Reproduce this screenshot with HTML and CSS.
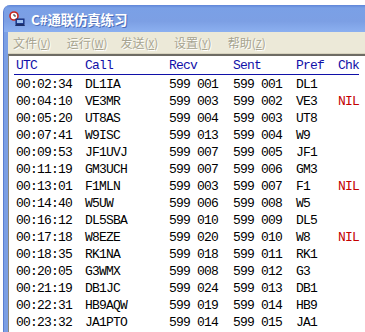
FILE: index.html
```html
<!DOCTYPE html>
<html lang="zh">
<head>
<meta charset="utf-8">
<title>C#通联仿真练习</title>
<link rel="stylesheet" href="styles.css">
</head>
<body>
<div class="window">
  <div class="titlebar">
    <svg class="app-icon" width="16" height="16" viewBox="0 0 16 16">
      <circle cx="5" cy="5" r="4" fill="#fff" stroke="#c8281e" stroke-width="1.6"/>
      <path d="M5 3v2h2" stroke="#333" stroke-width="1" fill="none"/>
      <rect x="7" y="8" width="8" height="5" fill="#2a50b0" stroke="#142a70" stroke-width="1"/>
      <rect x="8" y="9" width="6" height="3" fill="#9fc0f0"/>
      <path d="M6 15h10l-1-2H7z" fill="#1c2e6a"/>
    </svg>
    <span class="title">C#通联仿真练习</span>
  </div>
  <div class="menubar">
    <span class="menu-item">文件(<u>V</u>)</span>
    <span class="menu-item">运行(<u>W</u>)</span>
    <span class="menu-item">发送(<u>X</u>)</span>
    <span class="menu-item">设置(<u>Y</u>)</span>
    <span class="menu-item">帮助(<u>Z</u>)</span>
  </div>
  <div class="list">
    <div class="row head">
      <span>UTC</span><span>Call</span><span>Recv</span><span>Sent</span><span>Pref</span><span>Chk</span>
    </div>
    <div class="row"><span>00:02:34</span><span>DL1IA</span><span>599 001</span><span>599 001</span><span>DL1</span><span></span></div>
    <div class="row"><span>00:04:10</span><span>VE3MR</span><span>599 003</span><span>599 002</span><span>VE3</span><span class="nil">NIL</span></div>
    <div class="row"><span>00:05:20</span><span>UT8AS</span><span>599 004</span><span>599 003</span><span>UT8</span><span></span></div>
    <div class="row"><span>00:07:41</span><span>W9ISC</span><span>599 013</span><span>599 004</span><span>W9</span><span></span></div>
    <div class="row"><span>00:09:53</span><span>JF1UVJ</span><span>599 007</span><span>599 005</span><span>JF1</span><span></span></div>
    <div class="row"><span>00:11:19</span><span>GM3UCH</span><span>599 007</span><span>599 006</span><span>GM3</span><span></span></div>
    <div class="row"><span>00:13:01</span><span>F1MLN</span><span>599 003</span><span>599 007</span><span>F1</span><span class="nil">NIL</span></div>
    <div class="row"><span>00:14:40</span><span>W5UW</span><span>599 006</span><span>599 008</span><span>W5</span><span></span></div>
    <div class="row"><span>00:16:12</span><span>DL5SBA</span><span>599 010</span><span>599 009</span><span>DL5</span><span></span></div>
    <div class="row"><span>00:17:18</span><span>W8EZE</span><span>599 020</span><span>599 010</span><span>W8</span><span class="nil">NIL</span></div>
    <div class="row"><span>00:18:35</span><span>RK1NA</span><span>599 018</span><span>599 011</span><span>RK1</span><span></span></div>
    <div class="row"><span>00:20:05</span><span>G3WMX</span><span>599 008</span><span>599 012</span><span>G3</span><span></span></div>
    <div class="row"><span>00:21:19</span><span>DB1JC</span><span>599 024</span><span>599 013</span><span>DB1</span><span></span></div>
    <div class="row"><span>00:22:31</span><span>HB9AQW</span><span>599 019</span><span>599 014</span><span>HB9</span><span></span></div>
    <div class="row"><span>00:23:32</span><span>JA1PTO</span><span>599 014</span><span>599 015</span><span>JA1</span><span></span></div>
  </div>
</div>
</body>
</html>
```

FILE: styles.css
```css
html, body {
  margin: 0;
  padding: 0;
  background: #ffffff;
  height: 332px;
  overflow: hidden;
}
body {
  padding: 5px 0 0 3px;
  box-sizing: border-box;
}
.window {
  background: #7b9fe4;
  border-left: 1px solid #5a7ed0;
  border-top-left-radius: 7px;
  height: 340px;
  overflow: hidden;
}
.titlebar {
  height: 27px;
  display: flex;
  align-items: center;
  padding-left: 5px;
  gap: 6px;
  background: linear-gradient(#5f86d8 0, #7aa0e6 3px, #7c9fe4 60%, #8cb0f0 100%);
  border-top-left-radius: 7px;
}
.app-icon {
  display: block;
  margin-top: 1px;
}
.title {
  font-family: "Noto Sans CJK SC", sans-serif;
  font-weight: bold;
  font-size: 13.5px;
  color: #ffffff;
  text-shadow: 1px 1px 0 #4a6cb8;
  letter-spacing: -0.2px;
}
.menubar {
  margin-left: 4px;
  height: 21px;
  background: #ece9d8;
  display: flex;
  align-items: center;
  padding-left: 5px;
  border-bottom: 1px solid #d8d4c0;
}
.menu-item {
  width: 53.7px;
  font-family: "Noto Sans CJK SC", sans-serif;
  font-size: 12px;
  color: #a6a390;
  text-shadow: 1px 1px 0 #ffffff;
  white-space: nowrap;
  letter-spacing: 0px;
}
.menu-item u {
  font-size: 10px;
}
.list {
  margin-left: 4px;
  background: #ffffff;
  border-top: 2px solid #6e6c64;
  border-left: 1px solid #8a887c;
  height: 300px;
  padding-top: 2px;
  font-family: "Liberation Mono", monospace;
  font-size: 13px;
  letter-spacing: -0.8px;
  color: #000000;
}
.row {
  display: grid;
  grid-template-columns: 69px 84px 64px 63px 42px 30px;
  height: 17px;
  line-height: 17px;
  padding-left: 7px;
  white-space: pre;
}
.row.head {
  color: #1010a8;
  border-bottom: 1px solid #1010a8;
  margin: 0 6px 0 5px;
  padding-left: 2px;
  height: 16px;
  line-height: 16px;
  margin-bottom: 1px;
}
.nil {
  color: #c40000;
}
```
